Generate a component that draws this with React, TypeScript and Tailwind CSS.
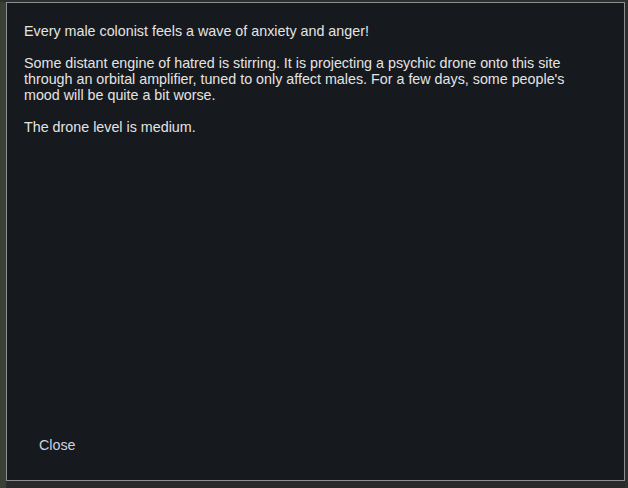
export default function App() {
  return (
    <div className="w-[628px] h-[488px] bg-[#2b2a2a] flex flex-col overflow-hidden">
      <div className="h-[2px] bg-[#2d302c]" />
      <div className="flex flex-1">
        <div className="w-[6px] bg-[#3b4036]" />
        <div
          className="w-[619px] h-[479px] border border-[#8b8f93] bg-[#16191e] flex flex-col text-[14.3px] leading-[16px] text-[#e4e4e4]"
          style={{ fontFamily: '"Liberation Sans", Arial, sans-serif' }}
        >
          <div className="pl-[17px] pr-[30px] pt-[20px] flex flex-col gap-[16px]">
            <p>Every male colonist feels a wave of anxiety and anger!</p>
            <p>
              Some distant engine of hatred is stirring. It is projecting a psychic drone onto this site
              through an orbital amplifier, tuned to only affect males. For a few days, some people's
              mood will be quite a bit worse.
            </p>
            <p>The drone level is medium.</p>
          </div>
          <div className="mt-auto pb-[27px] pl-[32px]">
            <button className="text-[#cdd1e0]">Close</button>
          </div>
        </div>
        <div className="flex-1 bg-[#2c2f2d]" />
      </div>
    </div>
  );
}
